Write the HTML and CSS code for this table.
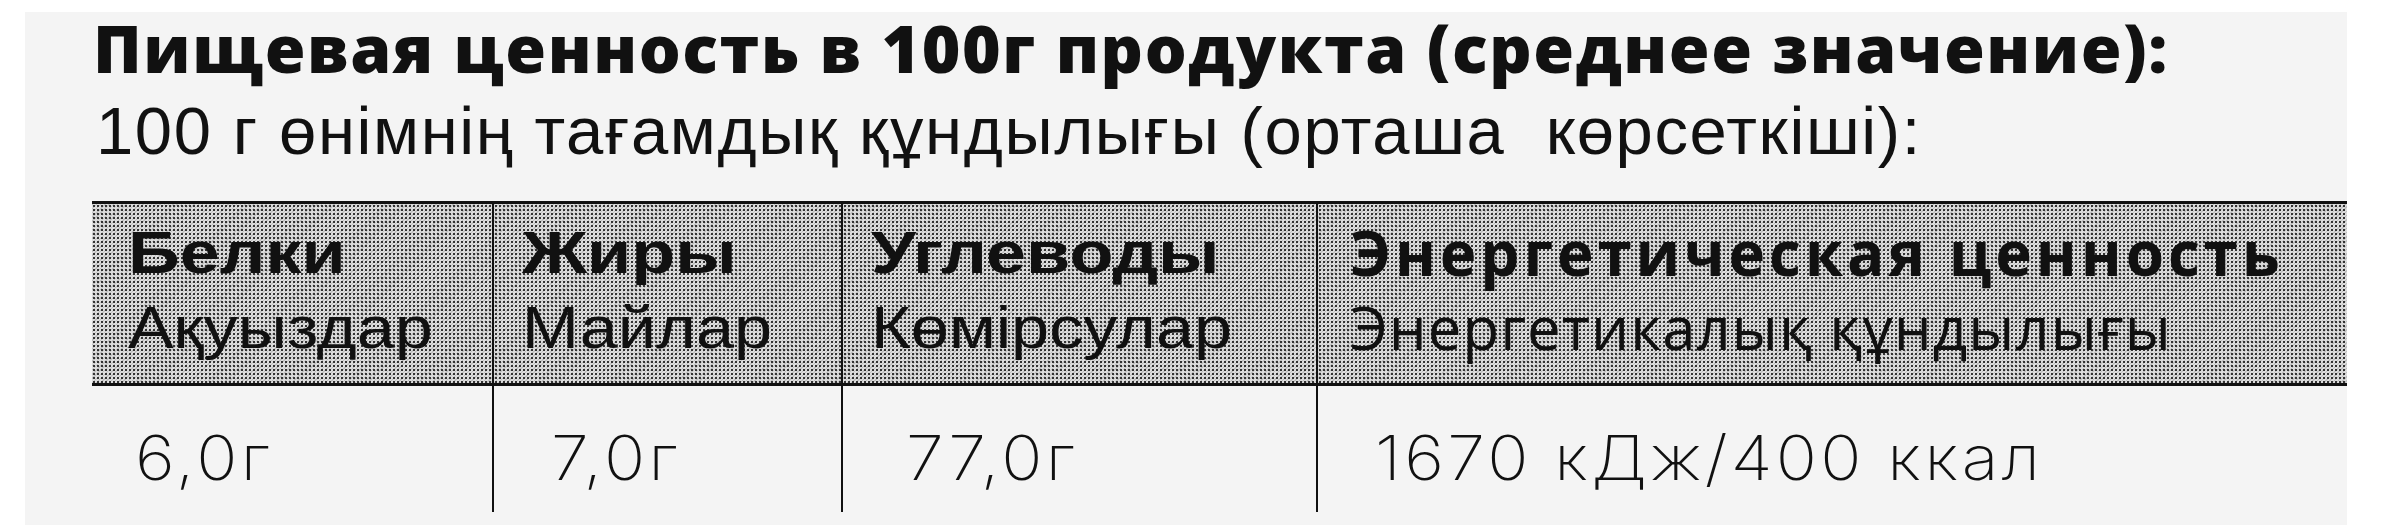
FILE: index.html
```html
<!DOCTYPE html>
<html lang="ru">
<head>
<meta charset="utf-8">
<title>Пищевая ценность</title>
<link rel="stylesheet" href="styles.css">
</head>
<body>
<div class="paper">
  <h1 class="title">Пищевая ценность в 100г продукта (среднее значение):</h1>
  <p class="subtitle">100 г өнімнің тағамдық құндылығы (орташа&nbsp; көрсеткіші):</p>
  <div class="table">
    <div class="head c1"><div class="h-ru">Белки</div><div class="h-kz">Ақуыздар</div></div>
    <div class="head c2"><div class="h-ru">Жиры</div><div class="h-kz">Майлар</div></div>
    <div class="head c3"><div class="h-ru">Углеводы</div><div class="h-kz">Көмірсулар</div></div>
    <div class="head c4 geo"><div class="h-ru">Энергетическая ценность</div><div class="h-kz">Энергетикалық құндылығы</div></div>
    <div class="cell c1 v1"><span class="val">6,0г</span></div>
    <div class="cell c2 v2"><span class="val">7,0г</span></div>
    <div class="cell c3 v3"><span class="val">77,0г</span></div>
    <div class="cell c4 v4"><span class="val">1670 кДж/400 ккал</span></div>
  </div>
</div>
</body>
</html>
```
FILE: styles.css
```css
html, body {
  margin: 0;
  padding: 0;
  background: #ffffff;
}
body {
  width: 2405px;
  height: 525px;
  overflow: hidden;
  color: #111111;
}
.paper {
  margin: 12px 58px 0 25px;
  height: 513px;
  padding-top: 1px;
  box-sizing: border-box;
  background: #f4f4f4;
}
.title {
  margin: 0 0 0 68px;
  font-family: "Open Sans", "Noto Sans", sans-serif;
  font-weight: 800;
  font-size: 66px;
  line-height: 68px;
  letter-spacing: 1.6px;
  white-space: nowrap;
}
.subtitle {
  margin: 10px 0 0 71px;
  font-family: "Liberation Sans", Arial, sans-serif;
  font-size: 67px;
  line-height: 80px;
  letter-spacing: 1.6px;
  white-space: nowrap;
}
.table {
  margin: 30px 0 0 67px;
  display: grid;
  grid-template-columns: 400px 349px 475px 1031px;
  grid-template-rows: 185px 126px;
}
.head {
  border-top: 3px solid #111;
  border-bottom: 3px solid #111;
  background:
    radial-gradient(circle at 50% 50%, #333 0.8px, rgba(0,0,0,0) 1.4px) 0 0 / 4px 4px,
    repeating-linear-gradient(135deg, rgba(0,0,0,0.13) 0 1px, rgba(0,0,0,0) 1px 3px),
    #dcdcdc;
  padding-top: 11px;
  font-family: "Liberation Sans", Arial, sans-serif;
  font-size: 60px;
  line-height: 75px;
  white-space: nowrap;
}
.h-ru {
  font-weight: 700;
  transform: scaleX(1.2);
  transform-origin: 0 50%;
}
.h-kz {
  font-weight: 400;
  transform: scaleX(1.14);
  transform-origin: 0 50%;
}
.cell {
  padding-top: 34px;
  font-family: Inter, "Open Sans", sans-serif;
  font-weight: 250;
  font-size: 62px;
  line-height: 75px;
  white-space: nowrap;
}
.val {
  display: inline-block;
  letter-spacing: 3px;
  transform: scaleX(1.1);
  transform-origin: 0 50%;
}
.c2, .c3, .c4 {
  border-left: 2px solid #111;
}
.head.c1 { padding-left: 36px; }
.head.c2 { padding-left: 28px; }
.head.c3 { padding-left: 28px; }
.head.c4 { padding-left: 32px; }
.v1 { padding-left: 43px; }
.v2 { padding-left: 57px; }
.v3 { padding-left: 63px; }
.v4 { padding-left: 57px; }
.geo {
  font-family: "Open Sans", "Noto Sans", sans-serif;
}
.geo .h-ru {
  font-weight: 700;
  font-size: 62px;
  letter-spacing: 3.85px;
  transform: none;
}
.geo .h-kz {
  font-weight: 400;
  font-size: 60px;
  letter-spacing: 1px;
  transform: none;
}
```
